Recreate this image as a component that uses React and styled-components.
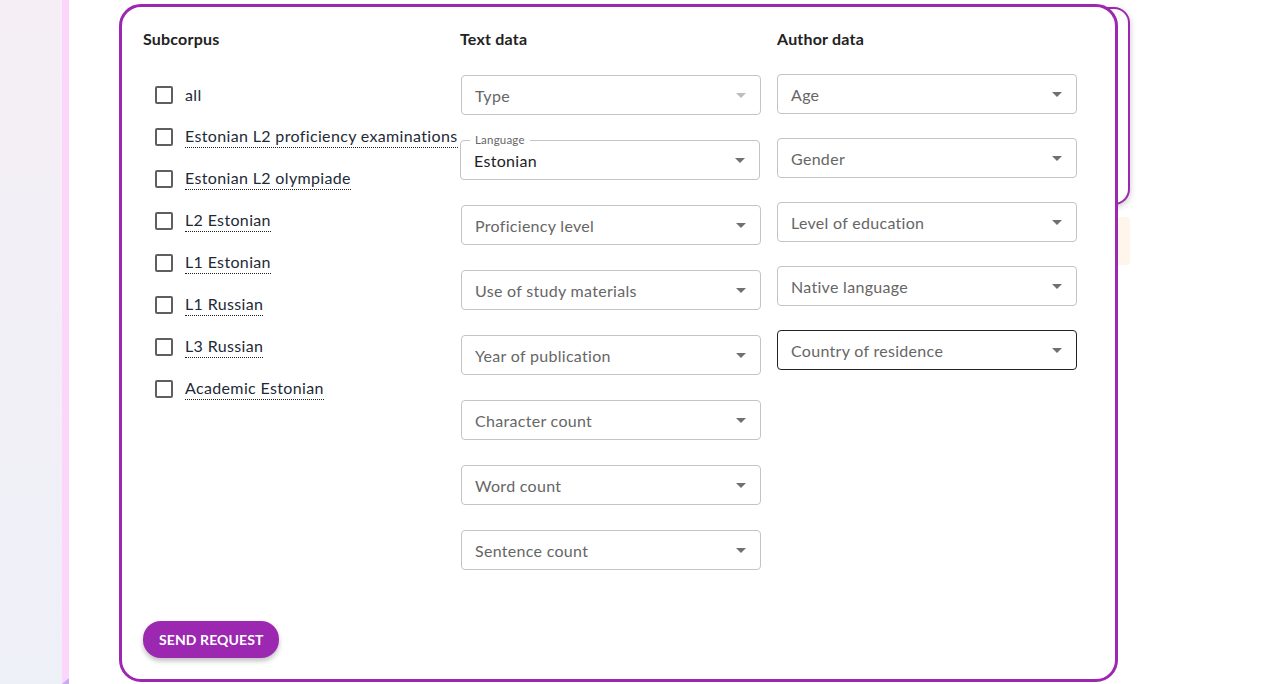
import React from "react";
import styled, { createGlobalStyle } from "styled-components";

const Global = createGlobalStyle`
  html, body { margin: 0; padding: 0; height: 684px; overflow: hidden; background: #fff; }
  body { font-family: "Lato", "Noto Sans", sans-serif; color: #222; }
  #root { height: 684px; }
  * { box-sizing: border-box; }
`;

const Page = styled.div`
  display: flex;
  height: 684px;
`;

const SideBg = styled.div`
  width: 62px;
  flex: none;
  background: linear-gradient(180deg, #f5eff5 0%, #eef0f8 100%);
`;

const PinkStrip = styled.div`
  width: 7px;
  flex: none;
  background: #fdd5fc;
  position: relative;
`;

const CornerMark = styled.div`
  position: absolute;
  left: 0;
  bottom: 0;
  width: 0;
  height: 0;
  border-left: 7px solid transparent;
  border-bottom: 6px solid #c9abf3;
`;

const Main = styled.div`
  flex: 1;
  position: relative;
  padding: 4px 0 0 50px;
`;

const BackCard = styled.div`
  position: absolute;
  left: 70px;
  top: 7px;
  width: 991px;
  height: 198px;
  border: 2px solid #9c27b0;
  border-radius: 16px;
  background: #fff;
  box-shadow: 0 2px 6px rgba(0, 0, 0, 0.22);
`;

const PeachNote = styled.div`
  position: absolute;
  left: 1040px;
  top: 217px;
  width: 21px;
  height: 48px;
  border-radius: 4px;
  background: #fff5ea;
`;

const Card = styled.div`
  position: relative;
  z-index: 1;
  width: 999px;
  height: 678px;
  border: 3px solid #9c27b0;
  border-radius: 22px;
  background: #fff;
  padding: 22px 0 21px 21px;
  display: flex;
  flex-direction: column;
`;

const Columns = styled.div`
  display: grid;
  grid-template-columns: 317px 317px 301px;
`;

const Column = styled.div`
  display: flex;
  flex-direction: column;
`;

const Heading = styled.h3`
  margin: 0;
  font-size: 16px;
  font-weight: 700;
  line-height: 20px;
  color: #222;
  letter-spacing: 0.2px;
`;

const CheckList = styled.div`
  display: flex;
  flex-direction: column;
  margin-top: 25px;
  padding-left: 12px;
`;

const CheckRow = styled.label`
  display: flex;
  align-items: center;
  height: 42px;
  gap: 12px;
  white-space: nowrap;
`;

const Box = styled.span`
  width: 18px;
  height: 18px;
  border: 2px solid #5f5f5f;
  border-radius: 2px;
  flex: none;
`;

const CheckText = styled.span`
  font-size: 16px;
  line-height: 20px;
  color: #1e2a38;
  padding-bottom: 1px;
  border-bottom: ${(p) => (p.$plain ? "none" : "1px dotted #222")};
  letter-spacing: 0.35px;
`;

const Fields = styled.div`
  display: flex;
  flex-direction: column;
  gap: ${(p) => p.$gap}px;
  margin-top: ${(p) => p.$top}px;
  margin-left: ${(p) => p.$shift || 0}px;
`;

const Field = styled.div`
  position: relative;
  width: 300px;
  height: 40px;
  border: 1px solid ${(p) => (p.$active ? "#222" : "#c4c4c4")};
  border-radius: 4px;
  display: flex;
  align-items: center;
  padding: 0 14px 0 13px;
  margin-left: ${(p) => p.$nudge || 0}px;
`;

const Placeholder = styled.span`
  flex: 1;
  font-size: 16px;
  color: ${(p) => (p.$value ? "#222" : "#666")};
  letter-spacing: 0.3px;
  white-space: nowrap;
`;

const FloatLabel = styled.span`
  position: absolute;
  left: 9px;
  top: -8px;
  padding: 0 5px;
  background: #fff;
  font-size: 11.5px;
  line-height: 14px;
  color: #666;
  letter-spacing: 0.2px;
`;

const Arrow = styled.svg`
  width: 10px;
  height: 5px;
  flex: none;
`;

const SendButton = styled.button`
  margin-top: auto;
  align-self: flex-start;
  height: 37px;
  padding: 0 16px;
  border: none;
  border-radius: 18px;
  background: #9c27b0;
  color: #fff;
  font-family: "Lato", "Noto Sans", sans-serif;
  font-size: 14px;
  font-weight: 700;
  letter-spacing: 0.1px;
  text-transform: uppercase;
  box-shadow: 0 3px 5px rgba(0, 0, 0, 0.25);
`;

const subcorpora = [
  "all",
  "Estonian L2 proficiency examinations",
  "Estonian L2 olympiade",
  "L2 Estonian",
  "L1 Estonian",
  "L1 Russian",
  "L3 Russian",
  "Academic Estonian",
];

const textFields = [
  { label: "Type", disabled: true },
  { label: "Language", value: "Estonian", nudge: -1 },
  { label: "Proficiency level" },
  { label: "Use of study materials" },
  { label: "Year of publication" },
  { label: "Character count" },
  { label: "Word count" },
  { label: "Sentence count" },
];

const authorFields = [
  { label: "Age" },
  { label: "Gender" },
  { label: "Level of education" },
  { label: "Native language" },
  { label: "Country of residence", active: true },
];

function Select({ label, value, disabled, active, nudge }) {
  return (
    <Field $active={active} $nudge={nudge}>
      {value && <FloatLabel>{label}</FloatLabel>}
      <Placeholder $value={!!value}>{value || label}</Placeholder>
      <Arrow viewBox="0 0 10 5">
        <path d="M0 0 L10 0 L5 5 Z" fill={disabled ? "#bdbdbd" : "#707070"} />
      </Arrow>
    </Field>
  );
}

export default function App() {
  return (
    <>
      <Global />
      <Page>
        <SideBg />
        <PinkStrip>
          <CornerMark />
        </PinkStrip>
        <Main>
          <BackCard />
          <PeachNote />
          <Card>
            <Columns>
              <Column>
                <Heading>Subcorpus</Heading>
                <CheckList>
                  {subcorpora.map((s, i) => (
                    <CheckRow key={s}>
                      <Box />
                      <CheckText $plain={i === 0}>{s}</CheckText>
                    </CheckRow>
                  ))}
                </CheckList>
              </Column>
              <Column>
                <Heading>Text data</Heading>
                <Fields $gap={25} $top={26} $shift={1}>
                  {textFields.map((f) => (
                    <Select key={f.label} {...f} />
                  ))}
                </Fields>
              </Column>
              <Column>
                <Heading>Author data</Heading>
                <Fields $gap={24} $top={25}>
                  {authorFields.map((f) => (
                    <Select key={f.label} {...f} />
                  ))}
                </Fields>
              </Column>
            </Columns>
            <SendButton>Send request</SendButton>
          </Card>
        </Main>
      </Page>
    </>
  );
}
